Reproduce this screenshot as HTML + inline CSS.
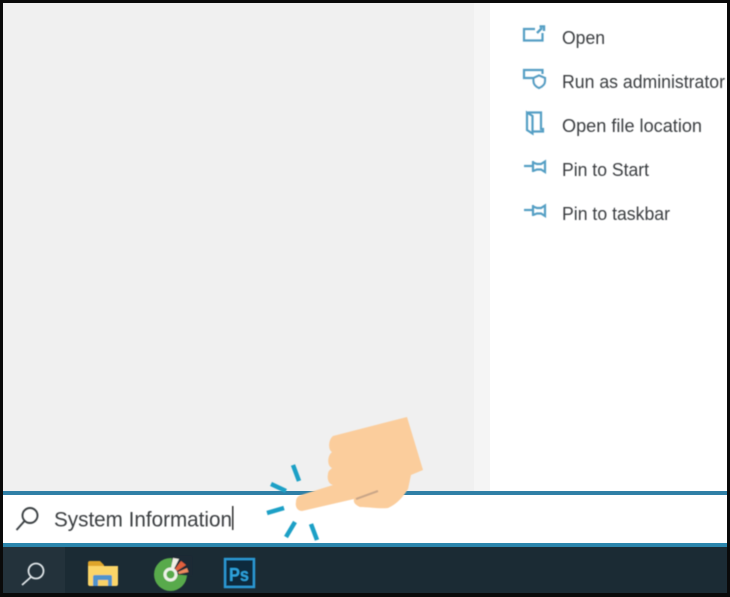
<!DOCTYPE html>
<html>
<head>
<meta charset="utf-8">
<style>
html,body{margin:0;padding:0;background:#000;width:730px;height:597px;overflow:hidden}
svg{display:block}
text{font-family:"Liberation Sans",sans-serif;fill:#3a3e41}
</style>
</head>
<body>
<svg width="730" height="597" viewBox="0 0 730 597" xmlns="http://www.w3.org/2000/svg">
<defs><filter id="b" x="-5%" y="-5%" width="110%" height="110%"><feGaussianBlur stdDeviation="0.45"/></filter></defs>
<rect width="730" height="597" fill="#0a0a0a"/>
<rect x="3" y="3" width="724" height="490" fill="#fff"/>
<rect x="3" y="3" width="471" height="488" fill="#f0f0f0"/>
<rect x="474" y="3" width="16" height="488" fill="#f5f5f5"/>
<!-- search bar -->
<rect x="3" y="491" width="724" height="4" fill="#2f7fa6"/>
<rect x="3" y="495" width="724" height="48" fill="#fff"/>
<rect x="3" y="543" width="724" height="4" fill="#2b86ad"/>
<rect x="3" y="547" width="724" height="46" fill="#1b2b34"/>
<rect x="3" y="547" width="62" height="46" fill="#23323b"/>

<g filter="url(#b)">
<!-- menu text -->
<text x="562" y="44" font-size="18.500" textLength="43" lengthAdjust="spacingAndGlyphs">Open</text>
<text x="562" y="88" font-size="18.500" textLength="163" lengthAdjust="spacingAndGlyphs">Run as administrator</text>
<text x="562" y="132" font-size="18.500" textLength="140" lengthAdjust="spacingAndGlyphs">Open file location</text>
<text x="562" y="176" font-size="18.500" textLength="87" lengthAdjust="spacingAndGlyphs">Pin to Start</text>
<text x="562" y="220" font-size="18.500" textLength="108" lengthAdjust="spacingAndGlyphs">Pin to taskbar</text>

<!-- menu icons -->
<g fill="none" stroke="#559fc4" stroke-width="2.200">
<path d="M535 29H524V40.500H542.500V33"/>
<path d="M537 33L542 28" stroke-width="2.400"/>
<path d="M539.500 26.500H544V31" stroke-width="2.400"/>
<path d="M533 78H524V70H542.500V74"/>
<path d="M533.500 78L539 75.500L545 78V81C545 84 542.500 86.500 539 88C535.500 86.500 533.500 84 533.500 81Z" fill="#fff"/>
<path d="M528 112.500H541V129H543V131.500H533"/>
<path d="M527 112.500V130L532.500 133.500V116Z"/>
<path d="M524 166H533"/>
<path d="M533 161V172M533 162.500L537 164H541L545 161.500V172L541 169.500H537L533 171"/>
<path d="M524 210H533"/>
<path d="M533 205V216M533 206.500L537 208H541L545 205.500V216L541 213.500H537L533 215"/>
</g>

<!-- search input -->
<g fill="none" stroke="#3a3f42" stroke-width="1.900">
<circle cx="30" cy="515.500" r="7.500"/>
<path d="M24.500 521L16.500 530"/>
</g>
<text x="54" y="526.500" font-size="21" textLength="178" lengthAdjust="spacingAndGlyphs">System Information</text>
<rect x="232" y="506" width="1.500" height="24" fill="#333"/>

<!-- taskbar search -->
<g fill="none" stroke="#dfe5e8" stroke-width="1.800">
<circle cx="36" cy="571" r="7.500"/>
<path d="M31 577L22 585"/>
</g>

<!-- folder -->
<path d="M88 563a2 2 0 0 1 2-2h10l4 4v3H88Z" fill="#dfa52c"/>
<path d="M88 566h30v18a2 2 0 0 1-2 2H90a2 2 0 0 1-2-2Z" fill="#fbd568"/>
<path d="M93 586V577a2 2 0 0 1 2-2H110a2 2 0 0 1 2 2V586Z" fill="#4f93cc"/>
<rect x="98" y="580" width="10" height="6" fill="#f7d166"/>

<!-- coc coc -->
<circle cx="170.500" cy="574.500" r="16.500" fill="#58aa4c"/>
<path d="M172 574L172 556L192 556L192 576Z" fill="#1b2b34"/>
<circle cx="170.500" cy="574.500" r="5.500" fill="#58aa4c" stroke="#eef2e8" stroke-width="3"/>
<path d="M173 558L179 559L174 569L171 568Z" fill="#f1efe6"/>
<path d="M181 561L186 565L177 571L175 569Z" fill="#e2603c"/>
<path d="M187 568L188.500 572L179 574L178 572Z" fill="#ee8a5e"/>

<!-- photoshop -->
<rect x="225" y="559" width="29" height="28" fill="#0b2a3c" stroke="#2a9ad6" stroke-width="2.400"/>
<text x="229" y="581" font-size="18" font-weight="bold" style="fill:#2fa3dd" textLength="20" lengthAdjust="spacingAndGlyphs">Ps</text>

<!-- click sparks -->
<g stroke="#1fa0c6" stroke-width="4.500" fill="none">
<path d="M293 465L299 481"/>
<path d="M271 484L286 491"/>
<path d="M267 513L284 508"/>
<path d="M295 522L286 537"/>
<path d="M311 524L317 540"/>
</g>

<!-- hand -->
<path d="M333 436L407 417L423 470L411 475L408 489C403 497 397 504 388 508C380 509 368 507 360 507C356 505 353 503 354 499L302 511C297 511 295 506 296 502C296 498 298 496 301 495L333 485C328 484 327 478 328 474C328 471 330 470 332 468C327 466 327 456 332 452C328 450 328 440 333 436Z" fill="#fbcd9c"/>
<path d="M356 499L378 491" stroke="#c9a688" stroke-width="2" fill="none"/>
</g>
</svg>
</body>
</html>
